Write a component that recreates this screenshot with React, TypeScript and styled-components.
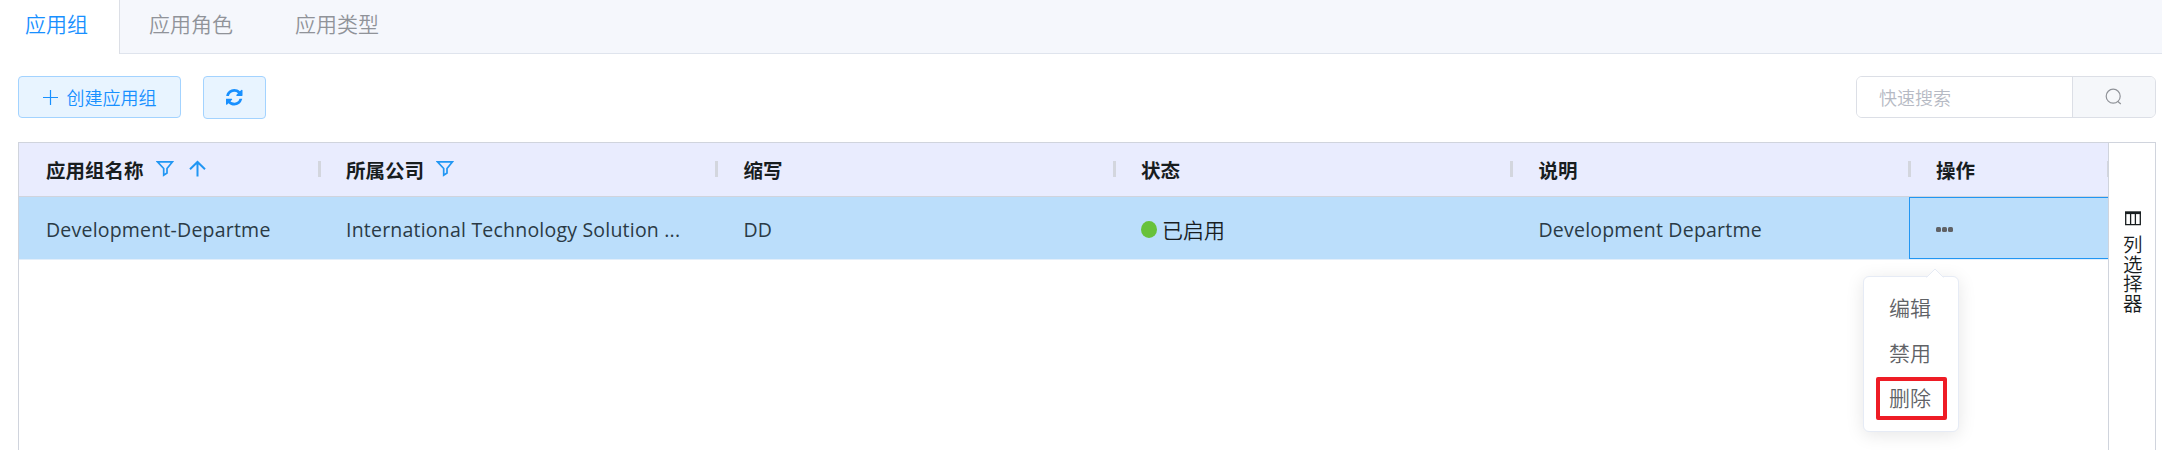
import React from 'react';
import styled, { createGlobalStyle, css } from 'styled-components';

const GlobalStyle = createGlobalStyle`
  * { box-sizing: border-box; }
  body {
    margin: 0;
    background: #fff;
    font-family: 'Open Sans', 'Noto Sans CJK SC', sans-serif;
    overflow: hidden;
  }
`;

const CJK = `'Noto Sans CJK SC', sans-serif`;

const Page = styled.div`
  display: flex;
  flex-direction: column;
  width: 2162px;
  height: 450px;
  overflow: hidden;
`;

const Tabs = styled.nav`
  display: flex;
  flex: none;
  height: 54px;
  background: #f5f7fc;
  border-bottom: 1px solid #dfe4ed;
`;

const Tab = styled.a<{ $active?: boolean }>`
  height: 53px;
  padding: 0 33px 0 29px;
  font: 350 21px/47px ${CJK};
  color: #909399;
  ${(p) =>
    p.$active &&
    css`
      height: 54px;
      padding: 0 31px 0 25px;
      background: #fff;
      color: #1890ff;
      border-right: 1px solid #dcdfe6;
    `}
`;

const Toolbar = styled.div`
  display: flex;
  flex: none;
  align-items: flex-start;
  gap: 22px;
  padding: 22px 6px 0 18px;
  height: 88px;
`;

const Button = styled.button<{ $tall?: boolean }>`
  display: flex;
  align-items: center;
  justify-content: center;
  gap: 9px;
  width: ${(p) => (p.$tall ? 63 : 163)}px;
  height: ${(p) => (p.$tall ? 43 : 42)}px;
  padding: 0;
  border: 1px solid #a3d3ff;
  border-radius: 4px;
  background: #e8f4ff;
  color: #1890ff;
  font: 350 18px/38px ${CJK};
`;

const Search = styled.div`
  display: flex;
  margin-left: auto;
  width: 300px;
  height: 42px;
  border: 1px solid #dcdfe6;
  border-radius: 6px;
  overflow: hidden;
`;

const SearchInput = styled.input`
  width: 216px;
  padding: 0 0 1px 22px;
  border: 0;
  border-right: 1px solid #dcdfe6;
  font: 350 18px/38px ${CJK};
  &::placeholder {
    color: #b6bac4;
    opacity: 1;
  }
`;

const SearchButton = styled.div`
  display: flex;
  flex: 1;
  align-items: center;
  justify-content: center;
  padding: 0 2px 1px 0;
  background: #f5f7fa;
`;

const Grid = styled.section`
  display: flex;
  flex: 1;
  margin: 0 6px 0 18px;
  border: 1px solid #d0d4dd;
  border-bottom: 0;
`;

const Rows = styled.div`
  width: 2089px;
  overflow: hidden;
`;

const Row = styled.div`
  display: grid;
  grid-template-columns: 300px repeat(4, 397.5px) 199.5px;
  height: 63px;
  background: #bbdefb;
  border-bottom: 1px solid #e2eefa;
`;

const HeaderRow = styled(Row)`
  height: 54px;
  background: #e9ecfe;
  border-bottom: 1px solid #d0d4dd;
`;

const HeaderCell = styled.div`
  display: flex;
  align-items: center;
  gap: 12px;
  padding: 1px 0 0 27px;
  font: 700 19.5px/52px ${CJK};
  color: #181d1f;
  &::after {
    content: '';
    width: 3px;
    height: 16px;
    margin: -3px -1.5px 0 auto;
    background: #d3d6de;
  }
`;

const HeaderIcons = styled.span`
  display: flex;
  align-items: center;
  gap: 15px;
  padding-bottom: 3px;
`;

const Cell = styled.div<{ $focused?: boolean }>`
  display: flex;
  align-items: center;
  padding: 4px 0 0 27px;
  font: 400 19.5px/58px 'Open Sans', ${CJK};
  letter-spacing: 0.21px;
  color: #2a3a45;
  white-space: nowrap;
  ${(p) =>
    p.$focused &&
    css`
      margin-right: -1px;
      padding: 3px 0 0 26px;
      border: 1px solid #2196f3;
      border-right: 0;
    `}
`;

const Status = styled.span`
  display: flex;
  align-items: center;
  gap: 5px;
  letter-spacing: 0;
  font: 350 21px/50px ${CJK};
  margin-top: -2px;
  color: #181d1f;
  &::before {
    content: '';
    width: 16px;
    height: 17px;
    margin-top: 1px;
    border-radius: 50%;
    background: #67c23a;
  }
`;

const More = styled.span`
  display: flex;
  gap: 1px;
  margin-bottom: 1px;
  i {
    width: 5px;
    height: 5px;
    border-radius: 1.5px;
    background: #606266;
  }
`;

const SideBar = styled.aside`
  display: flex;
  flex: 1;
  flex-direction: column;
  align-items: center;
  padding: 68px 0 0 2px;
  border-left: 1px solid #d0d4dd;
`;

const SideLabel = styled.span`
  width: 20px;
  margin-top: 8px;
  font: 350 19.5px/19.5px ${CJK};
  word-break: break-all;
  color: #181d1f;
`;

const Menu = styled.div`
  position: absolute;
  left: 1863px;
  top: 276px;
  width: 96px;
  height: 156px;
  padding: 9px 0 0 12px;
  background: #fff;
  border: 1px solid #e6ebf5;
  border-radius: 6px;
  box-shadow: 0 3px 18px rgba(0, 0, 0, 0.1);
`;

const MenuArrow = styled.svg`
  position: absolute;
  left: 62px;
  top: -9px;
`;

const MenuItem = styled.div<{ $marked?: boolean }>`
  width: 72px;
  height: 45px;
  padding-left: 13px;
  font: 350 21px/43px ${CJK};
  color: #606266;
  ${(p) =>
    p.$marked &&
    css`
      width: 71px;
      height: 43px;
      margin-top: 1px;
      padding-left: 9px;
      line-height: 33px;
      border: 4px solid #ee1c25;
      border-radius: 2px;
    `}
`;

const FilterIcon = () => (
  <svg width="18" height="17" viewBox="0 0 18 17" fill="none" stroke="#2196f3" strokeWidth="1.7">
    <path d="M1.5 1.8H16.5L11 8.5V13L7.7 15.2V8.5Z" />
  </svg>
);

const SortIcon = () => (
  <svg width="17" height="17" viewBox="0 0 17 17" fill="none" stroke="#2196f3" strokeWidth="2">
    <path d="M8.5 16.5V2M1 9.2L8.5 2L16 9.2" />
  </svg>
);

const PlusIcon = () => (
  <svg width="15" height="15" viewBox="0 0 15 15" fill="none" stroke="#1890ff" strokeWidth="1.2">
    <path d="M0 7.5H15M7.5 0V15" />
  </svg>
);

const RefreshIcon = () => (
  <svg width="16.5" height="16.5" viewBox="0 128 1536 1536" fill="#1890ff">
    <path d="M1511 1056q0 5-1 7-64 268-268 434.5t-478 166.5q-146 0-282.5-55t-243.5-157l-129 129q-19 19-45 19t-45-19-19-45v-448q0-26 19-45t45-19h448q26 0 45 19t19 45-19 45l-137 137q71 66 161 102t187 36q134 0 250-65t186-179q11-17 53-117 8-23 30-23h192q13 0 22.5 9.5t9.5 22.5zm25-800v448q0 26-19 45t-45 19h-448q-26 0-45-19t-19-45 19-45l138-138q-148-137-349-137-134 0-250 65t-186 179q-11 17-53 117-8 23-30 23h-199q-13 0-22.5-9.5t-9.5-22.5v-7q65-268 270-434.5t480-166.5q146 0 284 55.5t245 156.5l130-129q19-19 45-19t45 19 19 45z" />
  </svg>
);

const SearchIcon = () => (
  <svg width="17" height="17" viewBox="0 0 17 17" fill="none" stroke="#909399" strokeWidth="1.2">
    <circle cx="8.2" cy="8.2" r="7" />
    <path d="M12.6 13.2L15.8 16" />
  </svg>
);

const ColumnsIcon = () => (
  <svg width="16" height="15" viewBox="0 0 16 15" fill="none" stroke="#181d1f" strokeWidth="1.3">
    <path d="M0.7 1V13.6H15.3V1M5.6 2V13.6M10.4 2V13.6" />
    <path d="M0 1.7H16" strokeWidth="2.8" />
  </svg>
);

export default function App() {
  return (
    <Page>
      <GlobalStyle />
      <Tabs>
        <Tab $active>应用组</Tab>
        <Tab>应用角色</Tab>
        <Tab>应用类型</Tab>
      </Tabs>
      <Toolbar>
        <Button>
          <PlusIcon />
          创建应用组
        </Button>
        <Button $tall>
          <RefreshIcon />
        </Button>
        <Search>
          <SearchInput placeholder="快速搜索" />
          <SearchButton>
            <SearchIcon />
          </SearchButton>
        </Search>
      </Toolbar>
      <Grid>
        <Rows>
          <HeaderRow>
            <HeaderCell>
              应用组名称
              <HeaderIcons>
                <FilterIcon />
                <SortIcon />
              </HeaderIcons>
            </HeaderCell>
            <HeaderCell>
              所属公司
              <HeaderIcons>
                <FilterIcon />
              </HeaderIcons>
            </HeaderCell>
            <HeaderCell>缩写</HeaderCell>
            <HeaderCell>状态</HeaderCell>
            <HeaderCell>说明</HeaderCell>
            <HeaderCell>操作</HeaderCell>
          </HeaderRow>
          <Row>
            <Cell>Development-Departme</Cell>
            <Cell>International Technology Solution ...</Cell>
            <Cell>DD</Cell>
            <Cell>
              <Status>已启用</Status>
            </Cell>
            <Cell>Development Departme</Cell>
            <Cell $focused>
              <More>
                <i />
                <i />
                <i />
              </More>
            </Cell>
          </Row>
        </Rows>
        <SideBar>
          <ColumnsIcon />
          <SideLabel>列选择器</SideLabel>
        </SideBar>
      </Grid>
      <Menu>
        <MenuArrow width="18" height="10" viewBox="0 0 18 10" fill="#fff" stroke="#e6ebf5">
          <path d="M0.5 9.5L9 1L17.5 9.5" />
        </MenuArrow>
        <MenuItem>编辑</MenuItem>
        <MenuItem>禁用</MenuItem>
        <MenuItem $marked>删除</MenuItem>
      </Menu>
    </Page>
  );
}
